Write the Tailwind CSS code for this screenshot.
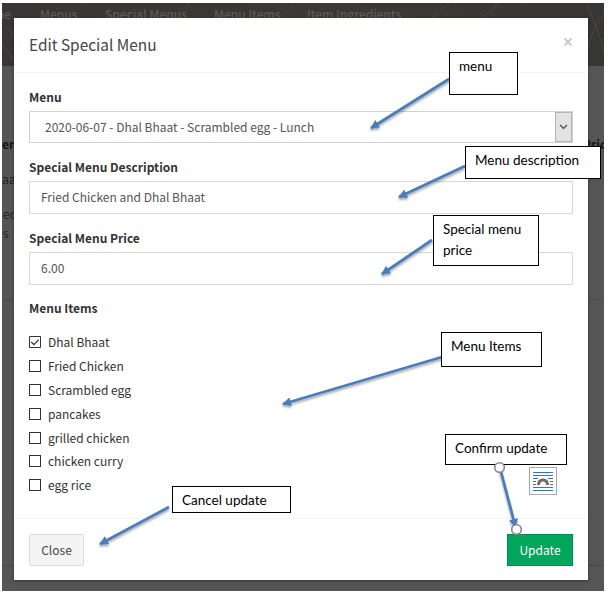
<!DOCTYPE html>
<html lang="en">
<head>
<meta charset="utf-8">
<title>Edit Special Menu</title>
<script src="https://cdn.jsdelivr.net/npm/@tailwindcss/browser@4"></script>
</head>
<body class="bg-white">
<main class="relative w-[612px] h-[603px] overflow-hidden pt-[3px] pl-[2px] font-['Noto_Sans_CJK_SC',sans-serif] text-[12px] leading-5 text-[#333]">

  <!-- dimmed page -->
  <div class="relative w-[602px] h-[588px] overflow-hidden bg-[#555556]">
    <div class="relative h-[63px] bg-linear-to-r from-[#383636] via-[#3d3834] to-[#383635] overflow-hidden">
      <svg class="absolute inset-0" width="602" height="63" fill="none" stroke="#4a4541"><path d="M170 16L188 0M280 16L293 0M430 15L448 0M480 15L498 0M584 0Q594 20 602 48M586 45Q592 20 602 12M0 42Q7 47 12 60M3 23Q9 28 12 35"/></svg>
      <nav class="relative font-medium text-[#5c5957] whitespace-nowrap">
        <span class="absolute right-[593px] top-px">Home</span>
        <span class="absolute left-[38px] top-px">Menus</span>
        <span class="absolute left-[103px] top-px">Special Menus</span>
        <span class="absolute left-[212px] top-px">Menu Items</span>
        <span class="absolute left-[305px] top-px">Item Ingredients</span>
      </nav>
    </div>
    <div class="absolute inset-x-0 top-[296px] border-t border-[#4b4b4c]"></div>
    <div class="absolute inset-x-0 top-[562px] border-t border-[#474748]"></div>
    <div class="absolute left-0 top-[131px] font-bold text-[#161616]">en</div>
    <div class="absolute left-[581px] top-[131px] font-bold text-[#161616]">Price</div>
    <div class="absolute left-0 top-[166px] text-[#222]">aat</div>
    <div class="absolute left-[1px] top-[201px] text-[#222]">ed</div>
    <div class="absolute left-[1px] top-[220px] text-[#222]">s</div>
  </div>

  <!-- dialog -->
  <section class="absolute left-[14px] top-[18px] w-[574px] h-[562px] bg-white flex flex-col shadow-[0_1px_3px_rgba(0,0,0,0.4)]">
    <header class="h-[55px] px-[15px] flex justify-between border-b border-[#f4f4f4]">
      <h1 class="text-[15.4px] leading-[53px] text-[#444]">Edit Special Menu</h1>
      <button class="w-[10px] h-[48px] flex items-center justify-center" aria-label="Close dialog"><svg width="8" height="8" viewBox="0 0 8 8" stroke="#c4c4c4" stroke-width="1.7"><path d="M.5 .5l7 7M7.5 .5l-7 7"/></svg></button>
    </header>
    <div class="flex-1 px-[15px] pt-[14px]">
      <label class="block h-6 font-bold">Menu</label>
      <div class="h-[32px] border border-[#d2d2d2] flex justify-between pl-[15px] text-[#555]">
        <span class="leading-[30px]">2020-06-07 - Dhal Bhaat - Scrambled egg - Lunch</span>
        <span class="w-[17px] bg-[#e3e3e3] border border-[#b5b5b5] flex items-center justify-center"><svg width="9" height="6" viewBox="0 0 9 6" fill="none" stroke="#444" stroke-width="1.2"><path d="M1 1l3.5 3.5L8 1"/></svg></span>
      </div>
      <label class="block h-6 mt-[14px] font-bold">Special Menu Description</label>
      <div class="h-[33px] border border-[#d8d8d8] px-[11px] leading-[30px] text-[#555]">Fried Chicken and Dhal Bhaat</div>
      <label class="block h-6 mt-[14px] font-bold">Special Menu Price</label>
      <div class="h-[33px] border border-[#d8d8d8] px-[11px] leading-[30px] text-[#555]">6.00</div>
      <div class="mt-[13px] h-[32px] font-bold">Menu Items</div>
      <ul class="leading-[23.9px]">
        <li class="flex items-center h-[23.9px] gap-[7px]"><svg width="12" height="12" fill="none" stroke="#333"><path d="M.5 .5h11v11H.5z"/><path d="M2.3 6l2.6 2.6 4.8-5" stroke-width="1.3"/></svg>Dhal Bhaat</li>
        <li class="flex items-center h-[23.9px] gap-[7px]"><span class="size-3 border border-[#333]"></span>Fried Chicken</li>
        <li class="flex items-center h-[23.9px] gap-[7px]"><span class="size-3 border border-[#333]"></span>Scrambled egg</li>
        <li class="flex items-center h-[23.9px] gap-[7px]"><span class="size-3 border border-[#333]"></span>pancakes</li>
        <li class="flex items-center h-[23.9px] gap-[7px]"><span class="size-3 border border-[#333]"></span>grilled chicken</li>
        <li class="flex items-center h-[23.9px] gap-[7px]"><span class="size-3 border border-[#333]"></span>chicken curry</li>
        <li class="flex items-center h-[23.9px] gap-[7px]"><span class="size-3 border border-[#333]"></span>egg rice</li>
      </ul>
    </div>
    <footer class="h-[62px] px-[15px] pt-[15px] border-t border-[#f4f4f4] flex items-start justify-between">
      <button class="w-[55px] h-[32px] rounded-[2px] border border-[#ddd] bg-[#f4f4f4] text-[#444]">Close</button>
      <button class="w-[66px] h-[32px] border border-[#008d4c] bg-[#00a65a] text-white">Update</button>
    </footer>
  </section>

  <!-- annotations -->
  <svg class="absolute inset-0" width="612" height="603" viewBox="0 0 612 603">
    <defs><filter id="s" x="-20%" y="-20%" width="140%" height="150%"><feDropShadow dx="0" dy="2" stdDeviation="1.2" flood-opacity=".35"/></filter>
    <marker id="a" markerUnits="userSpaceOnUse" markerWidth="10" markerHeight="10" refX="8" refY="4.5" orient="auto"><path d="M0 0L9 4.5L0 9z" fill="#4a7ebb"/></marker></defs>
    <g stroke="#4a7ebb" stroke-width="2.8" filter="url(#s)">
      <path d="M449 79L371 128" marker-end="url(#a)"/>
      <path d="M465 166L399 197" marker-end="url(#a)"/>
      <path d="M432 240L382 274" marker-end="url(#a)"/>
      <path d="M442 357L283 404" marker-end="url(#a)"/>
      <path d="M169 507L100 544" marker-end="url(#a)"/>
      <path d="M500 468L515.5 527" marker-end="url(#a)"/>
    </g>
  </svg>
  <div class="font-[Lato,sans-serif] text-[13.5px] leading-[21px] text-black">
    <div class="absolute left-[449px] top-[52px] w-[69px] h-[43px] bg-white border border-black pl-[9px] pt-[3px]">menu</div>
    <div class="absolute left-[465px] top-[146px] w-[136px] h-[33px] bg-white border border-black pl-[9px] pt-[3px]">Menu description</div>
    <div class="absolute left-[433px] top-[215px] w-[106px] h-[51px] bg-white border border-black pl-[9px] pt-[3px]">Special menu<br>price</div>
    <div class="absolute left-[441px] top-[332px] w-[101px] h-[35px] bg-white border border-black pl-[9px] pt-[3px]">Menu Items</div>
    <div class="absolute left-[445px] top-[434px] w-[122px] h-[31px] bg-white border border-black pl-[9px] pt-[3px]">Confirm update</div>
    <div class="absolute left-[172px] top-[486px] w-[119px] h-[27px] bg-white border border-black pl-[9px] pt-[3px]">Cancel update</div>
  </div>
  <svg class="absolute inset-0" width="612" height="603" viewBox="0 0 612 603">
    <g fill="#fff" stroke="#8c8686" stroke-width="1.6"><circle cx="499.5" cy="467.5" r="4.8"/><circle cx="516.5" cy="529.5" r="4.8"/></g>
    <rect x="529.5" y="467.5" width="27" height="27" fill="#fff" stroke="#aaa"/>
    <path d="M533 472.5h20M533 475.5h20M533 478.5h5M548 478.5h5M533 481.5h3M550 481.5h3M533 484.5h3M550 484.5h3M533 487.5h20M533 490.5h20" stroke="#3578ad"/>
    <path d="M538.5 485Q538.5 480 543 480T547.5 485" fill="none" stroke="#706b68" stroke-width="3"/>
  </svg>
</main>
</body>
</html>
